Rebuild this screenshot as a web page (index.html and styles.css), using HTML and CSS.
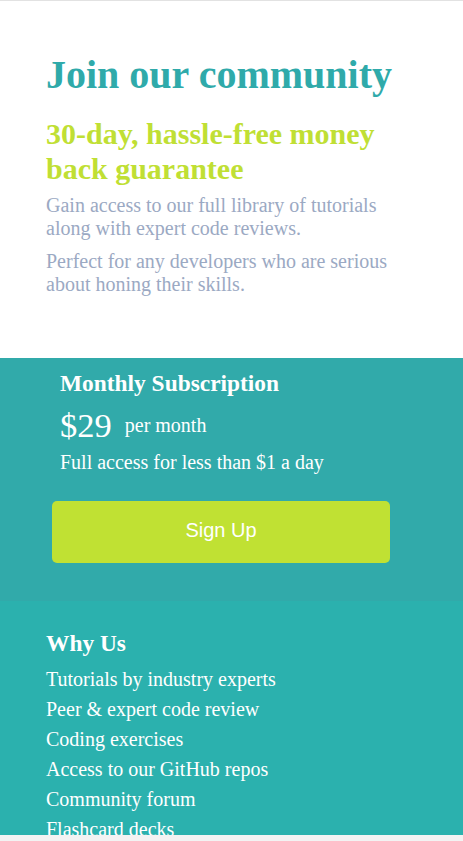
FILE: index.html
```html
<!DOCTYPE html>
<html lang="en">
<head>
<meta charset="utf-8">
<title>Join our community</title>
<link rel="stylesheet" href="styles.css">
</head>
<body>
<main class="card">
  <section class="intro">
    <h1 class="title">Join our community</h1>
    <h2 class="subtitle">30-day, hassle-free money back guarantee</h2>
    <p class="text">Gain access to our full library of tutorials along with expert code reviews.</p>
    <p class="text">Perfect for any developers who are serious about honing their skills.</p>
  </section>
  <section class="subscription">
    <h3 class="sub-title">Monthly Subscription</h3>
    <div class="price"><span class="amount">$29</span><span class="per">per month</span></div>
    <p class="sub-text">Full access for less than $1 a day</p>
    <button class="btn" type="button">Sign Up</button>
  </section>
  <section class="why">
    <h3 class="why-title">Why Us</h3>
    <ul class="why-list">
      <li>Tutorials by industry experts</li>
      <li>Peer &amp; expert code review</li>
      <li>Coding exercises</li>
      <li>Access to our GitHub repos</li>
      <li>Community forum</li>
      <li>Flashcard decks</li>
    </ul>
  </section>
</main>
</body>
</html>
```

FILE: styles.css
```css
* { box-sizing: border-box; }

html, body {
  margin: 0;
  padding: 0;
}

body {
  background: #f3f3f3;
  border-top: 1px solid #e2e2e2;
  font-family: "Liberation Serif", "Times New Roman", serif;
  font-size: 20px;
}

.card {
  background: #ffffff;
  height: 834px;
  overflow: hidden;
  display: flex;
  flex-direction: column;
}

.intro {
  padding: 51px 46px 62px;
}

.title {
  margin: 0;
  font-size: 40px;
  font-weight: 700;
  line-height: 46px;
  color: #2faaaa;
}

.subtitle {
  margin: 19px 0 0;
  font-size: 30px;
  font-weight: 700;
  line-height: 34.5px;
  color: #c0df34;
}

.text {
  margin: 8px 0 0;
  font-size: 20px;
  line-height: 23px;
  color: #9ba9c3;
}

.text + .text {
  margin-top: 10px;
}

.subscription {
  background: #31aaaa;
  padding: 12px 73px 38px 52px;
  color: #ffffff;
}

.sub-title {
  margin: 0 0 0 8px;
  font-size: 23.4px;
  font-weight: 700;
  line-height: 27px;
}

.price {
  display: flex;
  align-items: center;
  gap: 13px;
  margin: 8px 0 0 8px;
}

.amount {
  font-size: 34.5px;
  line-height: 40px;
}

.per {
  font-size: 20px;
  line-height: 23px;
}

.sub-text {
  margin: 6px 0 0 8px;
  font-size: 20px;
  line-height: 23px;
}

.btn {
  display: block;
  width: 100%;
  height: 62px;
  margin-top: 27px;
  padding: 0 0 4px;
  border: 0;
  border-radius: 5px;
  background: #c0e133;
  color: #ffffff;
  font-family: "Liberation Sans", Arial, sans-serif;
  font-size: 20px;
}

.why {
  background: #2bb1ae;
  padding: 29px 46px 0;
  color: #ffffff;
  flex: 1;
  min-height: 0;
}

.why-title {
  margin: 0;
  font-size: 23.4px;
  font-weight: 700;
  line-height: 27px;
}

.why-list {
  list-style: none;
  margin: 7px 0 0;
  padding: 0;
}

.why-list li {
  font-size: 20px;
  line-height: 30px;
}
```
